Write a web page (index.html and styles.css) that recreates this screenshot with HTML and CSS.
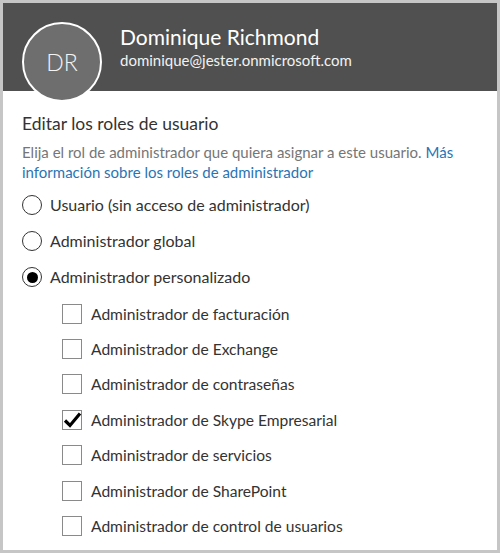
FILE: index.html
```html
<!DOCTYPE html>
<html lang="es">
<head>
<meta charset="utf-8">
<title>Editar los roles de usuario</title>
<link rel="stylesheet" href="styles.css">
</head>
<body>
<div class="frame">
  <header class="header">
    <div class="avatar">DR</div>
    <div class="info">
      <div class="name">Dominique Richmond</div>
      <div class="email">dominique@jester.onmicrosoft.com</div>
    </div>
  </header>
  <main class="content">
    <h1 class="title">Editar los roles de usuario</h1>
    <p class="desc">Elija el rol de administrador que quiera asignar a este usuario. <a class="link" href="#">Más</a><br><a class="link" href="#">información sobre los roles de administrador</a></p>
    <ul class="radios">
      <li class="row"><span class="radio"></span><span class="label">Usuario (sin acceso de administrador)</span></li>
      <li class="row"><span class="radio"></span><span class="label">Administrador global</span></li>
      <li class="row"><span class="radio checked"></span><span class="label">Administrador personalizado</span></li>
    </ul>
    <ul class="checks">
      <li class="crow"><span class="box"></span><span class="label">Administrador de facturación</span></li>
      <li class="crow"><span class="box"></span><span class="label">Administrador de Exchange</span></li>
      <li class="crow"><span class="box"></span><span class="label">Administrador de contraseñas</span></li>
      <li class="crow"><span class="box"><svg class="tick" viewBox="0 0 20 20" width="20" height="20"><path d="M3 10.5 L8 15.5 L18 3.5" fill="none" stroke="#000" stroke-width="3.2" stroke-linejoin="miter"/></svg></span><span class="label">Administrador de Skype Empresarial</span></li>
      <li class="crow"><span class="box"></span><span class="label">Administrador de servicios</span></li>
      <li class="crow"><span class="box"></span><span class="label">Administrador de SharePoint</span></li>
      <li class="crow"><span class="box"></span><span class="label">Administrador de control de usuarios</span></li>
    </ul>
  </main>
</div>
</body>
</html>
```
FILE: styles.css
```css
html, body {
  margin: 0;
  padding: 0;
  background: #ffffff;
}
.frame {
  width: 500px;
  height: 553px;
  box-sizing: border-box;
  border: 3px solid #c6c6c6;
  background: #ffffff;
  overflow: hidden;
  font-family: Lato, "Open Sans", sans-serif;
  color: #333333;
}
.header {
  height: 88px;
  box-sizing: border-box;
  background: #505050;
  display: flex;
  align-items: flex-start;
  padding: 19px 0 0 19px;
  gap: 18px;
}
.avatar {
  position: relative;
  z-index: 1;
  flex: none;
  width: 80px;
  height: 80px;
  box-sizing: border-box;
  border: 2px solid #ffffff;
  border-radius: 50%;
  background: #6e6e6e;
  color: #f4f4f4;
  font-size: 23px;
  font-weight: 300;
  display: flex;
  align-items: center;
  justify-content: center;
}
.info {
  padding-top: 1px;
  display: flex;
  flex-direction: column;
}
.name {
  color: #ffffff;
  font-size: 21px;
  line-height: 28px;
}
.email {
  color: #f2f2f2;
  font-size: 15px;
  line-height: 18px;
}
.content {
  padding: 21px 19px 0 19px;
}
.title {
  margin: 0;
  font-weight: normal;
  font-size: 17.5px;
  line-height: 24px;
  color: #333333;
}
.desc {
  margin: 6px 0 5px 0;
  font-size: 15px;
  line-height: 20px;
  color: #767676;
}
.link {
  color: #2a74b4;
  text-decoration: none;
}
.radios, .checks {
  list-style: none;
  margin: 0;
  padding: 0;
}
.row {
  height: 36px;
  display: flex;
  align-items: center;
  gap: 8px;
}
.checks {
  padding-left: 40px;
  padding-top: 1px;
}
.crow {
  height: 35.4px;
  display: flex;
  align-items: center;
  gap: 9px;
}
.radio {
  flex: none;
  width: 20px;
  height: 20px;
  box-sizing: border-box;
  border: 1.5px solid #333333;
  border-radius: 50%;
  display: flex;
  align-items: center;
  justify-content: center;
}
.radio.checked::after {
  content: "";
  width: 11px;
  height: 11px;
  border-radius: 50%;
  background: #000000;
}
.box {
  flex: none;
  position: relative;
  width: 20px;
  height: 20px;
  box-sizing: border-box;
  border: 1px solid #8a8a8a;
  background: #ffffff;
}
.tick {
  position: absolute;
  left: -1px;
  top: -1px;
}
.label {
  font-size: 16px;
  line-height: 20px;
  color: #333333;
}
.crow .label {
  font-size: 15.6px;
}
```
